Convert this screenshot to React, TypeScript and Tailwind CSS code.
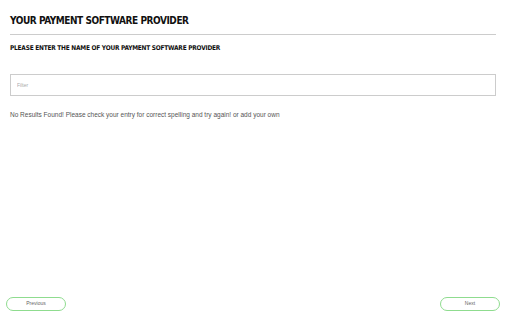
export default function App() {
  return (
    <div className="flex h-[321px] w-[512px] flex-col bg-white" style={{ fontFamily: '"Liberation Sans", Arial, sans-serif' }}>
      <div className="pl-[10px] pr-[16px]">
        <h1 className="pt-[15px] font-['DejaVu_Sans_Condensed','DejaVu_Sans',sans-serif] text-[10px] font-bold leading-[12px] tracking-[-0.45px] text-[#111] [font-stretch:condensed]">
          YOUR PAYMENT SOFTWARE PROVIDER
        </h1>
        <div className="mt-[7px] h-px bg-[#cccccc]" />
        <p className="mt-[9px] font-['DejaVu_Sans_Condensed','DejaVu_Sans',sans-serif] text-[6.5px] font-bold leading-[8px] tracking-[-0.22px] text-[#111] [font-stretch:condensed]">
          PLEASE ENTER THE NAME OF YOUR PAYMENT SOFTWARE PROVIDER
        </p>
        <input
          placeholder="Filter"
          className="mt-[22px] h-[22px] w-full border border-[#cccccc] px-[6px] text-[5px] text-[#333] placeholder:text-[#aaaaaa] outline-none"
        />
        <p className="mt-[15px] text-[6.5px] leading-[8px] text-[#555]">
          No Results Found! Please check your entry for correct spelling and try again! or add your own
        </p>
      </div>
      <div className="mt-auto flex justify-between pb-[10px] pl-[6px] pr-[12px]">
        <button className="flex h-[14px] w-[60px] items-center justify-center rounded-full border border-[#8fdc8f] text-[5px] text-[#666]">
          Previous
        </button>
        <button className="flex h-[14px] w-[60px] items-center justify-center rounded-full border border-[#8fdc8f] text-[5px] text-[#666]">
          Next
        </button>
      </div>
    </div>
  )
}
